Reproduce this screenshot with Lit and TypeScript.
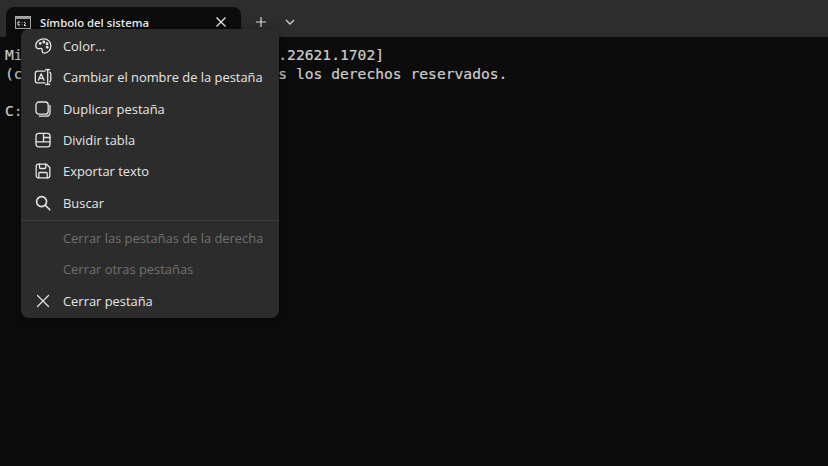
import { LitElement, html, css, svg } from "lit";
import { customElement } from "lit/decorators.js";

const ic = (body: unknown, w = 1.3) => html`<svg class="ic" width="18" height="18" viewBox="0 0 18 18" fill="none" stroke="currentColor" stroke-width=${w} stroke-linecap="round" stroke-linejoin="round">${body}</svg>`;

const icons = {
  palette: ic(svg`<path d="M9.800 1.900c-4.400 0-8 2.900-8 6.700 0 1.700.9 2.900 2.300 3.100 1.600.2 2.600-.7 3.500-.2.9.5.4 1.700.6 2.800.2 1.200 1.200 2 2.600 1.800 3.600-.6 6-3.700 6-7.300 0-3.900-2.800-6.900-7-6.900z"/><circle cx="6.200" cy="6.400" r=".8"/><circle cx="9.800" cy="5" r=".8"/><circle cx="13" cy="6.800" r=".8"/><circle cx="13.200" cy="10.300" r=".8"/>`),
  rename: ic(svg`<path d="M11 3.200H3.300a2 2 0 0 0-2 2v7.600a2 2 0 0 0 2 2H11"/><path d="M13.700 1.500v15M11.800 1.500c1 0 1.900.3 1.900 1.200 0-.9.900-1.200 1.900-1.200M11.800 16.500c1 0 1.900-.3 1.900-1.200 0 .9.900 1.200 1.900 1.200"/><path d="M15.700 4.200c.7.400 1.100 1 1.100 1.800v6c0 .8-.4 1.400-1.100 1.800"/><path d="M4.400 12.200 7.200 5.800l2.800 6.400M5.300 10.300h3.800"/>`),
  dup: ic(svg`<rect x="2" y="2" width="12.200" height="12.200" rx="3"/><path d="M16 5.500v7.200a3.500 3.500 0 0 1-3.500 3.500H5.400"/>`),
  split: ic(svg`<rect x="2" y="2.300" width="14" height="13.500" rx="2.600"/><path d="M9.500 2.300v8.500M2 10.800h14M9.500 6.500H16"/>`),
  save: ic(svg`<path d="M2.200 4.200a2 2 0 0 1 2-2h8.300l3.300 3.300v8.300a2 2 0 0 1-2 2H4.200a2 2 0 0 1-2-2z"/><path d="M5.500 2.200v3.300a1 1 0 0 0 1 1h4.200a1 1 0 0 0 1-1V2.200M4.800 15.800v-4.300a1 1 0 0 1 1-1h6.400a1 1 0 0 1 1 1v4.300"/>`),
  search: ic(svg`<circle cx="7.600" cy="7.600" r="5"/><path d="M11.300 11.300 15.800 15.800"/>`, 1.6),
  close: ic(svg`<path d="M3.500 3.500 14.500 14.500M14.500 3.500 3.500 14.500"/>`, 1.2),
};

@customElement("app-root")
export class AppRoot extends LitElement {
  static styles = css`
    :host { display: block; width: 828px; height: 466px; overflow: hidden; position: relative; background: #0c0c0c; font-family: "Open Sans", "Noto Sans", sans-serif; }
    .bar { height: 37px; box-sizing: border-box; padding: 7px 0 0 6px; background: #2d2d2d; display: flex; align-items: stretch; }
    .tab { width: 235px; box-sizing: border-box; background: #0c0c0c; border-radius: 8px 8px 0 0; display: flex; align-items: center; padding: 0 14px 0 9px; color: #f0f0f0; font-size: 11.300px; font-weight: 600; }
    .tabicon { margin-right: 9px; flex: none; }
    .tabtitle { flex: 1; margin-top: 1px; }
    .tabclose { display: flex; color: #ececec; }
    .new { width: 40px; display: flex; align-items: center; justify-content: center; color: #dcdcdc; }
    .drop { width: 18px; display: flex; align-items: center; justify-content: center; color: #d0d0d0; margin-left: -0.500px; }
    .term { margin: 0; padding: 9px 0 0 5px; color: #cccccc; font: 14.650px/18.500px "DejaVu Sans Mono", monospace; white-space: pre; -webkit-text-stroke: 0.2px #cccccc; }
    .menu { position: absolute; left: 21px; top: 29px; width: 258px; height: 289px; box-sizing: border-box; padding: 1.500px 0; background: #2c2c2c; border-radius: 8px; box-shadow: 0 4px 14px rgba(0,0,0,.45); color: #e6e6e6; font-size: 12.900px; }
    .row { height: 31.300px; display: flex; align-items: center; padding-left: 13px; }
    .ic { flex: none; display: block; }
    .slot { width: 18px; margin-right: 11px; flex: none; display: flex; }
    .off { color: #707070; }
    .sep { height: 1px; margin: 1.500px 0; background: #3d3d3d; }
  `;

  private row(icon: unknown, label: string, off = false) {
    return html`<div class="row ${off ? "off" : ""}"><span class="slot">${icon}</span><span>${label}</span></div>`;
  }

  render() {
    return html`
      <div class="bar">
        <div class="tab">
          <svg class="tabicon" width="16" height="13" viewBox="0 0 16 13"><rect x=".5" y=".5" width="15" height="12" fill="#161616" stroke="#a8a8a8"/><rect x="1" y="1" width="14" height="2" fill="#9c9c9c"/><path d="M3 6H5M3 6V9M3 9H5M7 6.500V7M7 8.500V9M9 9.500 11 9.500M9 6l1.500 1.500L9 9" stroke="#e8e8e8" fill="none" stroke-width="1"/></svg>
          <span class="tabtitle">Símbolo del sistema</span>
          <span class="tabclose"><svg width="12" height="12" viewBox="0 0 12 12" fill="none" stroke="currentColor" stroke-width="1.300"><path d="M1.500 1.500 10.500 10.500M10.500 1.500 1.500 10.500"/></svg></span>
        </div>
        <div class="new"><svg width="12" height="12" viewBox="0 0 12 12" fill="none" stroke="currentColor" stroke-width="1.200"><path d="M6 1V11M1 6H11"/></svg></div>
        <div class="drop"><svg width="10" height="6" viewBox="0 0 10 6" fill="none" stroke="currentColor" stroke-width="1.300"><path d="M1 1 5 5 9 1"/></svg></div>
      </div>
      <pre class="term">Microsoft Windows [Versión 10.0.22621.1702]
(c) Microsoft Corporation. Todos los derechos reservados.

C:\\Users\\Usuario&gt;</pre>
      <div class="menu">
        ${this.row(icons.palette, "Color...")}
        ${this.row(icons.rename, "Cambiar el nombre de la pestaña")}
        ${this.row(icons.dup, "Duplicar pestaña")}
        ${this.row(icons.split, "Dividir tabla")}
        ${this.row(icons.save, "Exportar texto")}
        ${this.row(icons.search, "Buscar")}
        <div class="sep"></div>
        ${this.row(null, "Cerrar las pestañas de la derecha", true)}
        ${this.row(null, "Cerrar otras pestañas", true)}
        ${this.row(icons.close, "Cerrar pestaña")}
      </div>
    `;
  }
}
